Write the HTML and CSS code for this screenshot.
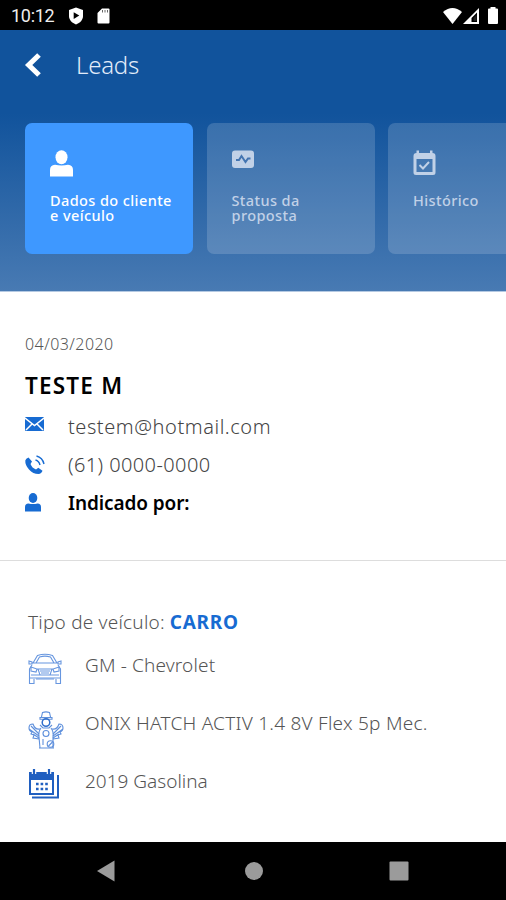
FILE: index.html
```
<!DOCTYPE html>
<html lang="pt-BR">
<head>
  <meta charset="UTF-8">
  <meta name="viewport" content="width=device-width, initial-scale=1">
  <title>Leads</title>
  <link rel="stylesheet" href="styles.css">
</head>
<body>
  <div class="status-bar">
    <span class="clock">10:12</span>
    <svg class="shield" width="16" height="18" viewBox="0 0 16 18"><path d="M8 .5L15 3v6c0 4-3 7-7 8.500C4 16 1 13 1 9V3z" fill="#fff"/><path d="M5.700 5.300v6.600l5.600-3.300z" fill="#000"/></svg>
    <svg class="sdcard" width="13" height="16" viewBox="0 0 13 16"><path d="M5 .5h6.500a1 1 0 0 1 1 1v13a1 1 0 0 1-1 1h-10a1 1 0 0 1-1-1V5z" fill="#fff"/><path d="M5.500 2v2.500M8 2v2.500M10.500 2v2.500" stroke="#666" stroke-width="1"/></svg>
    <svg class="signals" width="56" height="18" viewBox="0 0 56 18">
      <path d="M0 5Q9.500-3 19 5L9.500 17z" fill="#fff"/>
      <path fill-rule="evenodd" d="M20 17L36 1v16zM28.500 15H34V5.500l-5.500 5.500z" fill="#fff"/><path d="M30.500 11l3-3v6h-3z" fill="#222"/>
      <path d="M47.500 0h5v1.500H54a1 1 0 0 1 1 1V16a1 1 0 0 1-1 1h-8a1 1 0 0 1-1-1V2.500a1 1 0 0 1 1-1h1.500z" fill="#fff"/>
    </svg>
  </div>

  <header class="header">
    <div class="title-row">
      <svg width="18" height="26" viewBox="0 0 18 26"><path d="M15 3L4.700 13 15 23" fill="none" stroke="#fff" stroke-width="5.200"/></svg>
      <h1>Leads</h1>
    </div>
    <div class="tabs">
      <div class="tab active">
        <svg width="23" height="27" viewBox="0 0 23 27"><ellipse cx="11.500" cy="7.300" rx="6" ry="7" fill="#fff"/><path d="M0 26.500V20q0-5 5-5.200 6.500 1.200 13 0 5 .2 5 5.200v6.500z" fill="#fff"/></svg>
        <span>Dados do cliente</span>
        <span>e veículo</span>
      </div>
      <div class="tab status">
        <svg width="22" height="27" viewBox="0 0 22 27"><rect y=".5" width="22" height="17.500" rx="3" fill="#c1d1e7"/><path d="M4 10h3l2.500-4 4 6 2.500-3.500h2.500" fill="none" stroke="#4475b1" stroke-width="2"/></svg>
        <span>Status da</span>
        <span>proposta</span>
      </div>
      <div class="tab history">
        <svg width="23" height="27" viewBox="0 0 23 27"><path fill-rule="evenodd" d="M3.500 0.500h2.500v2.500h11V.5h2.500V3q3 0 3 3V22.500q0 2.500-2.500 2.500H3Q.5 25 .5 22.500V6q0-3 3-3zM3.500 9v13h16V9z" fill="#c1d1e7"/><path d="M6.500 15l3.500 3.500 6-6.500" fill="none" stroke="#c1d1e7" stroke-width="2"/></svg>
        <span>Histórico</span>
      </div>
    </div>
  </header>

  <section class="client">
    <div class="date">04/03/2020</div>
    <h2>TESTE M</h2>
    <div class="contact email">
      <svg width="19" height="14" viewBox="0 0 19 14"><rect width="19" height="14" rx="1" fill="#176bd2"/><path d="M0 1l9.500 7.500L19 1M1 13l6-6M18 13l-6-6" fill="none" stroke="#fff" stroke-width="1.500"/></svg>
      <span>testem@hotmail.com</span>
    </div>
    <div class="contact phone">
      <svg width="20" height="20" viewBox="0 0 20 20"><path d="M3.500 2.500L7 6.500 5.500 9q1.500 4 5.500 5.500l2.300-1.700 4.200 3q-1 3-4 3.200Q8 19 4 14.500 0 10 .3 5.500.8 3.300 3.500 2.500z" fill="#176bd2"/><path d="M10.500 5q3.500 1 4.500 5M11.500 1q6 1.500 7.500 8" fill="none" stroke="#176bd2" stroke-width="1.400"/></svg>
      <span>(61) 0000-0000</span>
    </div>
    <div class="contact referral">
      <svg width="16" height="19" viewBox="0 0 16 19"><ellipse cx="8" cy="5" rx="4.300" ry="5" fill="#176bd2"/><path d="M0 18.500V14q0-3.400 3.500-3.600 4.500 1 9 0Q16 10.600 16 14v4.500z" fill="#176bd2"/></svg>
      <span>Indicado por:</span>
    </div>
  </section>

  <section class="vehicle">
    <div class="type"><span>Tipo de veículo:</span><b>CARRO</b></div>
    <div class="detail brand">
      <svg width="34" height="32" viewBox="0 0 34 32" fill="none" stroke="#6796df" stroke-width="1.100">
        <path d="M5 10L9.500 2.500Q17 0 24.500 2.500L29 10M8 10l3.500-6q5.500-1.700 11 0l3.500 6M4 10h26M1 8l3 1v2H1zM33 8l-3 1v2h3zM4 12l-2.500 4v9h31v-9L30 12"/>
        <path d="M3 14l6 2-1 3-5-1zM31 14l-6 2 1 3 5-1zM10 16h14l-2 6H12zM12 18h10M13 20h8M3 22h28M1.500 25v5.500H6V26M32.500 25v5.500H28V26M8 26h18"/>
      </svg>
      <span>GM - Chevrolet</span>
    </div>
    <div class="detail model">
      <svg width="36" height="38" viewBox="0 0 36 38" fill="none" stroke="#5f90dc" stroke-width="1.100">
        <path d="M13.500 6l1-4.500q3.500-1.200 7 0l1 4.500M12 6.500h12v1.800H12z"/>
        <circle cx="18" cy="11.500" r="3.800" stroke="#2f6fcd" stroke-width="1.500"/>
        <path d="M12 14l3 3h6l3-3M13 17q-3 4-2 9l1 11h13V26q1-5-2-9M11 37h15"/>
        <path d="M12 18q-5 1-7-5-4 0-4 4 0 3 3 4l-1 2 3 1-1 3 6 1M3 15l8 8M1 18l10 7M5 23l6 4"/>
        <path d="M24 18q5 1 7-5 4 0 4 4 0 3-3 4l1 2-3 1 1 3-6 1M33 15l-8 8M35 18l-10 7M31 23l-6 4"/>
        <circle cx="18" cy="22.500" r="3"/><circle cx="22.500" cy="33" r="3.300"/><path d="M20.500 35l4-4M15 28v6"/>
      </svg>
      <span>ONIX HATCH ACTIV 1.4 8V Flex 5p Mec.</span>
    </div>
    <div class="detail year">
      <svg width="31" height="30" viewBox="0 0 31 30">
        <path fill-rule="evenodd" d="M0 3h25v23H0zM2 11v13h21V11z" fill="#205fc0"/>
        <path d="M5 0v5M20 0v5" stroke="#fff" stroke-width="4.500"/><path d="M5 0v5M20 0v5" stroke="#205fc0" stroke-width="2.200"/>
        <path d="M7 15h12M7 20h12" stroke="#205fc0" stroke-width="2.500" stroke-dasharray="2.600 2"/>
        <path d="M3 28.500h26V6" fill="none" stroke="#205fc0" stroke-width="2"/>
      </svg>
      <span>2019 Gasolina</span>
    </div>
  </section>

  <nav class="nav-bar">
    <svg width="18" height="22" viewBox="0 0 18 22"><path d="M0 11L17.500.5v21z" fill="#9b9b9b"/></svg>
    <svg class="home" width="18" height="18" viewBox="0 0 18 18"><circle cx="9" cy="9" r="9" fill="#9b9b9b"/></svg>
    <svg width="20" height="20" viewBox="0 0 20 20"><rect x=".5" y=".5" width="19" height="19" rx="1" fill="#9b9b9b"/></svg>
  </nav>
</body>
</html>
```
FILE: styles.css
```
* { box-sizing: border-box; }
body { margin: 0; width: 506px; height: 900px; overflow: hidden; display: flex; flex-direction: column; background: #fff; font-family: "Noto Sans", "Open Sans", sans-serif; }
svg { display: block; flex: none; }
h1, h2 { margin: 0; }
span { white-space: nowrap; }

.status-bar { height: 30px; flex: none; display: flex; align-items: center; padding: 2px 7px 0 11px; background: #000; color: #eee; }
.clock { width: 57px; font: 400 18px/24px Roboto, sans-serif; letter-spacing: -0.3px; }
.sdcard { margin-left: 13px; }
.signals { margin-left: auto; }

.header { height: 262px; flex: none; overflow: hidden; background: linear-gradient(#11539c 0, #11539c 32%, #487ab3 100%); border-bottom: 1px solid #b4c9e2; }
.title-row { height: 93px; padding: 22px 0 0 24px; display: flex; gap: 34px; color: #e2ecfa; }
.title-row h1 { font-size: 24px; line-height: 26px; font-weight: 300; letter-spacing: -0.2px; }
.tabs { display: flex; gap: 13.500px; padding-left: 25px; }
.tab { width: 168px; height: 131px; flex: none; padding: 27px 0 0 25px; border-radius: 7px; background: rgba(255,255,255,.16); color: #c1d1e7; font-size: 14.500px; line-height: 15px; font-weight: 500; letter-spacing: .4px; }
.tab svg { margin-bottom: 16px; }
.tab span { display: block; }
.active { background: #3e98ff; color: #fff; }

.client { height: 269px; flex: none; padding: 40px 25px 0; border-bottom: 1px solid #ddd; }
.date { height: 25px; font-size: 16px; line-height: 24px; font-weight: 300; letter-spacing: .45px; color: #555; }
.client h2 { height: 49px; font-size: 22.500px; line-height: 57px; font-weight: 600; letter-spacing: 1.2px; color: #000; }
.contact { height: 38px; display: flex; align-items: center; color: #444; font-size: 20px; font-weight: 300; }
.contact svg { margin-right: auto; }
.contact span { width: 413px; line-height: 28px; }
.email { padding-top: 3px; letter-spacing: .55px; }
.email svg { position: relative; top: -3px; }
.phone { padding-top: 4px; letter-spacing: .4px; }
.referral { padding-top: 3px; color: #000; font-size: 19px; font-weight: 600; letter-spacing: -0.1px; }

.vehicle { flex: 1; padding: 46px 28px 0; }
.type { display: flex; gap: 5px; height: 42px; font-size: 19px; line-height: 30px; font-weight: 300; letter-spacing: .22px; color: #555; }
.type b { color: #176bd2; font-weight: 700; letter-spacing: .7px; }
.detail { height: 58px; display: flex; align-items: flex-start; font-size: 19px; font-weight: 300; color: #555; }
.detail span { margin-left: auto; width: 393px; line-height: 32px; }
.brand { letter-spacing: .15px; }
.model { letter-spacing: .25px; }
.brand svg { margin-top: 4px; }
.model svg { margin-top: 4px; }
.year svg { margin: 4px 0 0 1px; }

.nav-bar { height: 58px; flex: none; display: flex; align-items: center; justify-content: space-between; padding: 0 97px; background: #000; }
.home { margin-left: 3px; }
```
